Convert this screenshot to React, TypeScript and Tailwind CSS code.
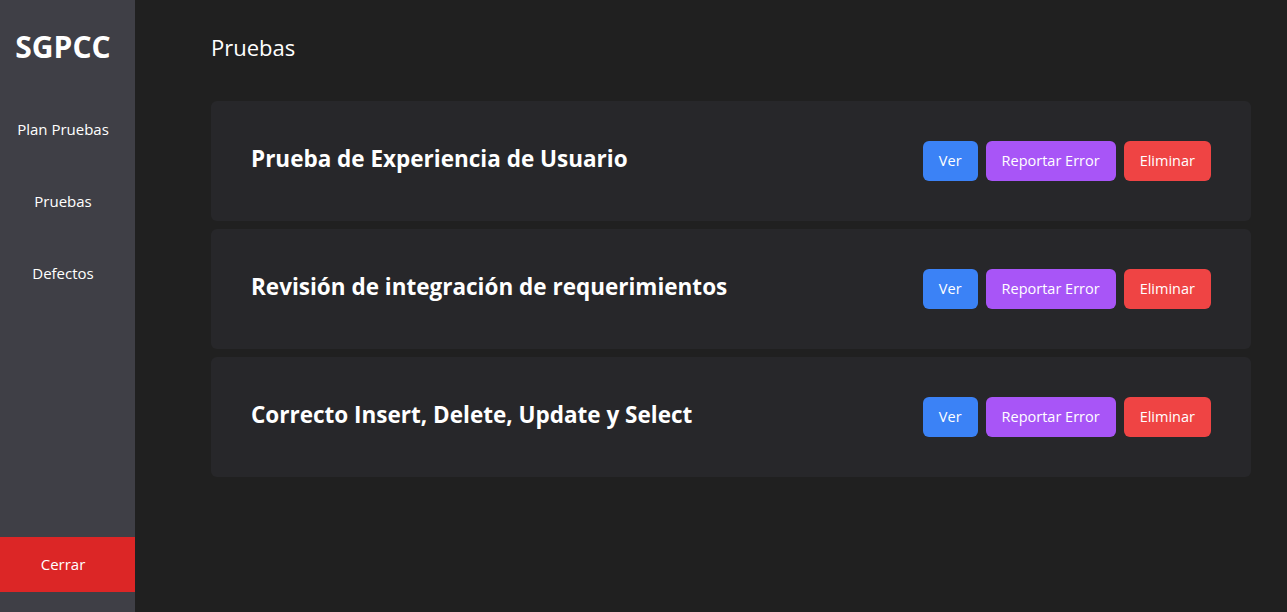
const pruebas = [
  "Prueba de Experiencia de Usuario",
  "Revisión de integración de requerimientos",
  "Correcto Insert, Delete, Update y Select",
];

const menu = ["Plan Pruebas", "Pruebas", "Defectos"];

function Sidebar() {
  return (
    <aside className="flex h-screen w-[135px] shrink-0 flex-col bg-[#3f3f46] text-white">
      <h1 className="pt-[29px] pr-[9px] text-center text-[30px] leading-9 font-bold">SGPCC</h1>
      <nav className="mt-[28px] flex flex-col">
        {menu.map((item) => (
          <a key={item} href="#" className="flex h-[72px] items-center justify-center pr-[9px] text-[15px]">
            {item}
          </a>
        ))}
      </nav>
      <button className="mt-auto mb-5 h-[55px] w-full bg-[#dc2626] pr-[9px] text-[15px] text-white">Cerrar</button>
    </aside>
  );
}

function PruebaCard({ nombre }: { nombre: string }) {
  return (
    <div className="flex h-[120px] items-center justify-between rounded-md bg-[#27272a] px-10">
      <h3 className="pb-1 text-[22.5px] font-bold text-white">{nombre}</h3>
      <div className="flex gap-2">
        <button className="h-10 rounded-md bg-[#3b82f6] px-4 text-[14.5px] text-white">Ver</button>
        <button className="h-10 rounded-md bg-[#a855f7] px-4 text-[14.5px] text-white">Reportar Error</button>
        <button className="h-10 rounded-md bg-[#ef4444] px-4 text-[14.5px] text-white">Eliminar</button>
      </div>
    </div>
  );
}

export default function App() {
  return (
    <div className="flex h-screen bg-[#202020] font-['Open_Sans',sans-serif]">
      <Sidebar />
      <main className="flex-1 pt-[31px] pr-9 pl-[76px]">
        <h2 className="text-[22px] leading-8 text-white">Pruebas</h2>
        <div className="mt-[38px] flex flex-col gap-2">
          {pruebas.map((p) => (
            <PruebaCard key={p} nombre={p} />
          ))}
        </div>
      </main>
    </div>
  );
}
